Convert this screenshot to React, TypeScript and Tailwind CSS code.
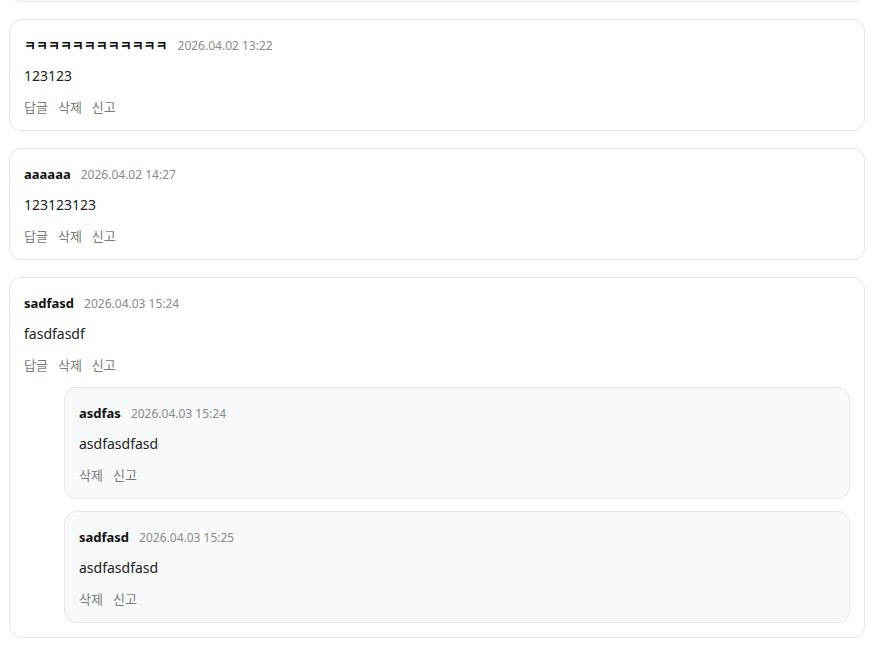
import React from "react";

type Reply = { author: string; date: string; body: string };
type Comment = { author: string; date: string; body: string; replies?: Reply[] };

const comments: Comment[] = [
  { author: "ㅋㅋㅋㅋㅋㅋㅋㅋㅋㅋㅋㅋ", date: "2026.04.02 13:22", body: "123123" },
  { author: "aaaaaa", date: "2026.04.02 14:27", body: "123123123" },
  {
    author: "sadfasd",
    date: "2026.04.03 15:24",
    body: "fasdfasdf",
    replies: [
      { author: "asdfas", date: "2026.04.03 15:24", body: "asdfasdfasd" },
      { author: "sadfasd", date: "2026.04.03 15:25", body: "asdfasdfasd" },
    ],
  },
];

function CommentBody({ author, date, body, canReply }: { author: string; date: string; body: string; canReply: boolean }) {
  return (
    <>
      <div className="flex h-[22px] items-center gap-[10px]">
        <span className="text-[13px] font-bold text-[#111]">{author}</span>
        <span className="text-[12px] text-[#8a8a8a]">{date}</span>
      </div>
      <p className="mt-2 h-[22px] text-[14px] leading-[22px] text-[#222]">{body}</p>
      <div className="mt-[10px] flex h-[22px] items-center gap-[10px] text-[13px] text-[#7a7a7a]">
        {canReply && <button>답글</button>}
        <button>삭제</button>
        <button>신고</button>
      </div>
    </>
  );
}

export default function App() {
  return (
    <div
      className="h-[651px] overflow-hidden bg-white pl-[9px]"
      style={{ fontFamily: '"Noto Sans", "Noto Sans CJK KR", sans-serif' }}
    >
      <div className="flex w-[856px] flex-col gap-[17px]">
        {/* previous card, scrolled off */}
        <div className="-mt-[110px] h-[112px] rounded-xl border border-[#e5e5e5] bg-white" />
        {comments.map((c, i) => (
          <div key={i} className="rounded-xl border border-[#e5e5e5] bg-white px-[14px] pt-[15px] pb-[11px]">
            <CommentBody author={c.author} date={c.date} body={c.body} canReply />
            {c.replies && (
              <div className="ml-10 mt-[10px] mb-[3px] flex flex-col gap-3">
                {c.replies.map((r, j) => (
                  <div key={j} className="rounded-xl border border-[#e6e8eb] bg-[#f8f9fb] px-[14px] pt-[15px] pb-[11px]">
                    <CommentBody author={r.author} date={r.date} body={r.body} canReply={false} />
                  </div>
                ))}
              </div>
            )}
          </div>
        ))}
      </div>
    </div>
  );
}
